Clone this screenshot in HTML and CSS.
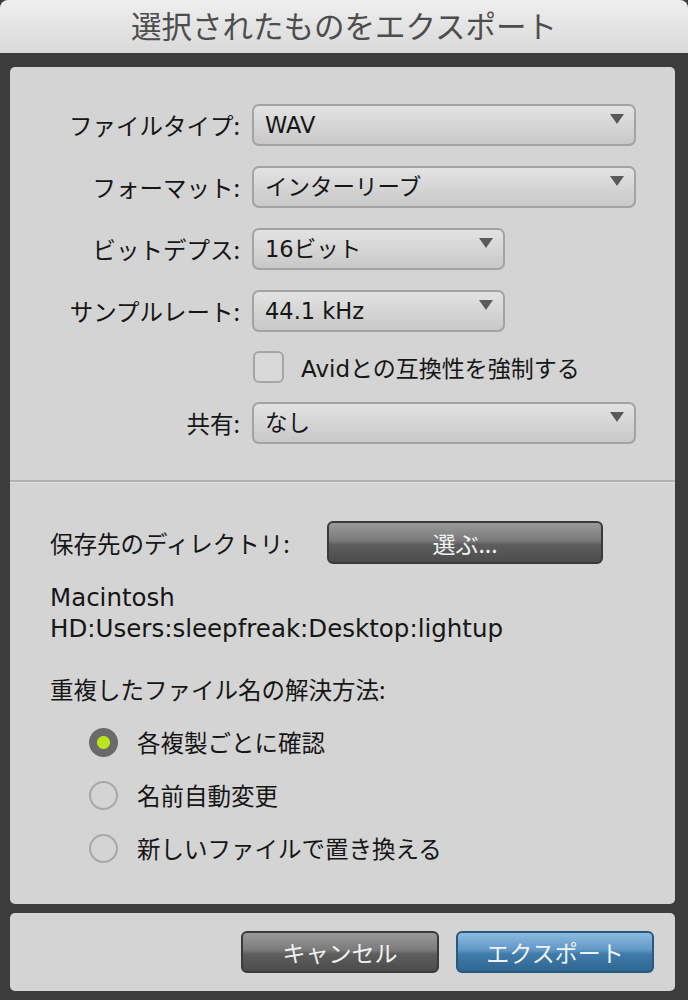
FILE: index.html
```html
<!DOCTYPE html>
<html lang="ja">
<head>
    <meta charset="UTF-8">
    <meta name="viewport" content="width=device-width, initial-scale=1.0">
    <title>選択されたものをエクスポート</title>
    <link rel="stylesheet" href="styles.css">
</head>
<body>
    <div class="window">
        <header class="titlebar">選択されたものをエクスポート</header>

        <main class="panel">
            <!-- Format settings -->
            <section class="settings">
                <label class="field-label">ファイルタイプ:</label>
                <div class="select wide">WAV<span class="arrow"></span></div>

                <label class="field-label">フォーマット:</label>
                <div class="select wide">インターリーブ<span class="arrow"></span></div>

                <label class="field-label">ビットデプス:</label>
                <div class="select short">16ビット<span class="arrow"></span></div>

                <label class="field-label">サンプルレート:</label>
                <div class="select short">44.1 kHz<span class="arrow"></span></div>

                <span></span>
                <div class="check-row">
                    <span class="checkbox"></span>
                    <span>Avidとの互換性を強制する</span>
                </div>

                <label class="field-label">共有:</label>
                <div class="select wide">なし<span class="arrow"></span></div>
            </section>

            <hr class="divider">

            <!-- Destination -->
            <section class="destination">
                <div class="dir-row">
                    <span class="dir-label">保存先のディレクトリ:</span>
                    <button class="btn dark choose">選ぶ...</button>
                </div>
                <p class="path">Macintosh<br>HD:Users:sleepfreak:Desktop:lightup</p>

                <p class="group-title">重複したファイル名の解決方法:</p>
                <ul class="radios">
                    <li><span class="radio checked"></span>各複製ごとに確認</li>
                    <li><span class="radio"></span>名前自動変更</li>
                    <li><span class="radio"></span>新しいファイルで置き換える</li>
                </ul>
            </section>
        </main>

        <footer class="actions">
            <button class="btn dark">キャンセル</button>
            <button class="btn blue">エクスポート</button>
        </footer>
    </div>
</body>
</html>
```

FILE: styles.css
```css
html, body {
    margin: 0;
    padding: 0;
}

body {
    background-color: #3c3c3c;
    font-family: 'DejaVu Sans', 'Noto Sans CJK JP', sans-serif;
    color: #161616;
    font-size: 23px;
}

.window {
    width: 688px;
    height: 1000px;
    display: flex;
    flex-direction: column;
}

/* Title bar */
.titlebar {
    height: 53px;
    display: flex;
    align-items: center;
    justify-content: center;
    background: linear-gradient(#efefef, #d9d9d9);
    border-radius: 8px 8px 0 0;
    font-family: 'Noto Sans CJK JP', sans-serif;
    font-size: 30.5px;
    color: #4d4d4d;
    padding-bottom: 4px;
    box-sizing: border-box;
}

/* Main panel */
.panel {
    margin: 14px 13px 0 10px;
    background-color: #d4d4d4;
    border-radius: 5px;
    height: 837px;
    box-sizing: border-box;
}

.settings {
    display: grid;
    grid-template-columns: 230px 384px;
    column-gap: 12px;
    row-gap: 20px;
    padding-top: 37px;
    align-items: center;
}

.field-label {
    text-align: right;
    font-family: 'Noto Sans CJK JP', sans-serif;
    font-size: 23.5px;
    line-height: 30px;
}

.select {
    position: relative;
    height: 42px;
    box-sizing: border-box;
    border: 2px solid #a3a3a3;
    border-radius: 7px;
    background: linear-gradient(#e3e3e3, #c8c8c8);
    padding-left: 11px;
    display: flex;
    align-items: center;
    font-size: 22.5px;
    line-height: 30px;
}

.select.short {
    width: 253px;
}

.arrow {
    position: absolute;
    right: 10px;
    top: 8px;
    width: 0;
    height: 0;
    border-left: 7px solid transparent;
    border-right: 7px solid transparent;
    border-top: 10px solid #5a5a5a;
}

.check-row {
    display: flex;
    align-items: center;
    gap: 17px;
    height: 30px;
    font-size: 23px;
}

.checkbox {
    width: 27px;
    height: 28px;
    border: 2px solid #a5a5a5;
    border-radius: 6px;
    background-color: #d8d8d8;
    margin-left: 1px;
}

.divider {
    margin: 36px 0 0 0;
    border: none;
    border-top: 2px solid #b2b2b2;
    border-bottom: 1px solid #e0e0e0;
}

/* Destination section */
.destination {
    padding: 38px 0 0 40px;
}

.dir-row {
    display: flex;
    align-items: center;
}

.dir-label {
    width: 277px;
    font-family: 'Noto Sans CJK JP', sans-serif;
    font-size: 23.5px;
}

.path {
    margin: 18px 0 0 0;
    line-height: 31px;
    font-size: 24.5px;
}

.group-title {
    margin: 30px 0 0 0;
    line-height: 30px;
    font-family: 'Noto Sans CJK JP', sans-serif;
    font-size: 23.5px;
}

.radios {
    list-style: none;
    margin: 23px 0 0 0;
    padding: 0 0 0 39px;
    display: flex;
    flex-direction: column;
    gap: 23px;
}

.radios li {
    display: flex;
    align-items: center;
    gap: 19px;
    height: 30px;
    font-family: 'Noto Sans CJK JP', sans-serif;
    font-size: 23.5px;
}

.radio {
    width: 25px;
    height: 25px;
    border: 2px solid #a8a8a8;
    border-radius: 50%;
    box-sizing: content-box;
}

.radio.checked {
    border: none;
    width: 29px;
    height: 29px;
    background: radial-gradient(circle, #b8e61a 0 6px, #6a6a6a 7px);
}

/* Buttons */
.btn {
    font-family: 'Noto Sans CJK JP', sans-serif;
    font-size: 23px;
    height: 43px;
    border-radius: 6px;
    color: #f2f2f2;
    cursor: pointer;
    padding: 0;
}

.btn.dark {
    border: 2px solid #3a3a3a;
    background: linear-gradient(#9a9a9a 0%, #7a7a7a 45%, #5e5e5e 55%, #4c4c4c 100%);
}

.btn.blue {
    border: 2px solid #27587e;
    background: linear-gradient(#8ebbe0 0%, #5f97c6 45%, #3f7bab 55%, #2f6790 100%);
}

.choose {
    width: 276px;
}

/* Footer */
.actions {
    margin: 9px 13px 0 10px;
    height: 78px;
    background-color: #d4d4d4;
    border-radius: 5px;
    display: flex;
    justify-content: flex-end;
    align-items: center;
    gap: 17px;
    padding-right: 21px;
    box-sizing: border-box;
}

.actions .btn {
    width: 198px;
    height: 42px;
}
```
